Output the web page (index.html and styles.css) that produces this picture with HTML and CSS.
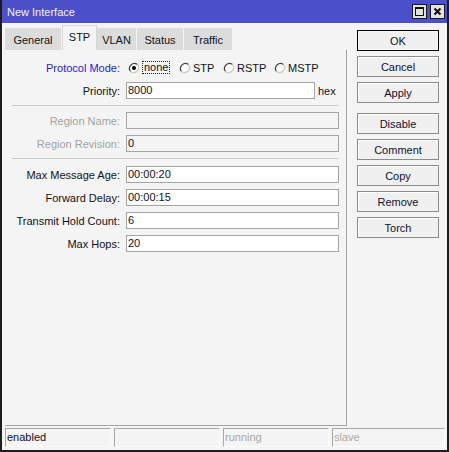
FILE: index.html
```html
<!DOCTYPE html>
<html>
<head>
<meta charset="utf-8">
<title>New Interface</title>
<link rel="stylesheet" href="styles.css">
</head>
<body>
<div class="window">
  <div class="titlebar">
    <span class="title">New Interface</span>
    <span class="tb-btn"><svg width="13" height="13" viewBox="0 0 13 13"><rect x="2.5" y="2.5" width="8" height="8" fill="none" stroke="#111" stroke-width="1"/><rect x="2" y="2" width="9" height="2" fill="#111"/></svg></span>
    <span class="tb-btn"><svg width="13" height="13" viewBox="0 0 13 13"><path d="M3.5 3.5 L9.5 9.5 M9.5 3.5 L3.5 9.5" stroke="#111" stroke-width="2"/></svg></span>
  </div>
  <div class="main">
    <div class="left">
      <div class="tabs">
        <div class="tab t-general">General</div>
        <div class="tab active t-stp">STP</div>
        <div class="tab t-vlan">VLAN</div>
        <div class="tab t-status">Status</div>
        <div class="tab t-traffic">Traffic</div>
      </div>
      <div class="panel">
        <div class="group">
          <div class="row">
            <div class="label blue">Protocol Mode:</div>
            <div class="radios">
              <div class="radio r1"><svg class="rb" width="12" height="12" viewBox="0 0 12 12"><circle cx="6" cy="6" r="5" fill="#fff"/><path d="M9.5 2.5 A5 5 0 0 0 2.5 9.5" stroke="#444" stroke-width="1.2" fill="none"/><path d="M2.5 9.5 A5 5 0 0 0 9.5 2.5" stroke="#c8c8c8" stroke-width="1.2" fill="none"/><circle cx="6" cy="6" r="2" fill="#000"/></svg><span class="focus">none</span></div>
              <div class="radio r2"><svg class="rb" width="12" height="12" viewBox="0 0 12 12"><circle cx="6" cy="6" r="5" fill="#fff"/><path d="M9.5 2.5 A5 5 0 0 0 2.5 9.5" stroke="#444" stroke-width="1.2" fill="none"/><path d="M2.5 9.5 A5 5 0 0 0 9.5 2.5" stroke="#c8c8c8" stroke-width="1.2" fill="none"/></svg><span>STP</span></div>
              <div class="radio r3"><svg class="rb" width="12" height="12" viewBox="0 0 12 12"><circle cx="6" cy="6" r="5" fill="#fff"/><path d="M9.5 2.5 A5 5 0 0 0 2.5 9.5" stroke="#444" stroke-width="1.2" fill="none"/><path d="M2.5 9.5 A5 5 0 0 0 9.5 2.5" stroke="#c8c8c8" stroke-width="1.2" fill="none"/></svg><span>RSTP</span></div>
              <div class="radio r4"><svg class="rb" width="12" height="12" viewBox="0 0 12 12"><circle cx="6" cy="6" r="5" fill="#fff"/><path d="M9.5 2.5 A5 5 0 0 0 2.5 9.5" stroke="#444" stroke-width="1.2" fill="none"/><path d="M2.5 9.5 A5 5 0 0 0 9.5 2.5" stroke="#c8c8c8" stroke-width="1.2" fill="none"/></svg><span>MSTP</span></div>
            </div>
          </div>
          <div class="row">
            <div class="label">Priority:</div>
            <div class="input short">8000</div>
            <div class="suffix">hex</div>
          </div>
        </div>
        <div class="sep"></div>
        <div class="group">
          <div class="row">
            <div class="label disabled">Region Name:</div>
            <div class="input off"></div>
          </div>
          <div class="row">
            <div class="label disabled">Region Revision:</div>
            <div class="input off">0</div>
          </div>
        </div>
        <div class="sep sep2"></div>
        <div class="group">
          <div class="row">
            <div class="label">Max Message Age:</div>
            <div class="input">00:00:20</div>
          </div>
          <div class="row">
            <div class="label">Forward Delay:</div>
            <div class="input">00:00:15</div>
          </div>
          <div class="row">
            <div class="label">Transmit Hold Count:</div>
            <div class="input">6</div>
          </div>
          <div class="row">
            <div class="label">Max Hops:</div>
            <div class="input">20</div>
          </div>
        </div>
      </div>
    </div>
    <div class="right">
      <div class="btn default">OK</div>
      <div class="btn">Cancel</div>
      <div class="btn">Apply</div>
      <div class="btn spaced">Disable</div>
      <div class="btn">Comment</div>
      <div class="btn">Copy</div>
      <div class="btn">Remove</div>
      <div class="btn">Torch</div>
    </div>
  </div>
  <div class="status">
    <div class="cell">enabled</div>
    <div class="cell"></div>
    <div class="cell dim">running</div>
    <div class="cell dim last">slave</div>
  </div>
</div>
</body>
</html>
```

FILE: styles.css
```css
html, body {
  margin: 0;
  padding: 0;
  background: #f4f4f4;
}
body {
  font-family: "Liberation Sans", Arial, sans-serif;
  font-size: 11px;
  color: #111118;
}
.window {
  width: 449px;
  height: 452px;
  box-sizing: border-box;
  border: 2px solid #1c1c1c;
  border-top: 0;
  background: #f4f4f4;
  display: flex;
  flex-direction: column;
}
.titlebar {
  height: 23px;
  flex: none;
  background: #4b4fc9;
  color: #f4f4f4;
  display: flex;
  align-items: center;
  padding: 0 2px 0 5px;
  gap: 3px;
}
.title {
  flex: 1;
  font-size: 11px;
  padding-top: 1px;
}
.tb-btn {
  width: 15px;
  height: 15px;
  box-sizing: border-box;
  border: 1px solid #1a1a1a;
  background: #e2e2e2;
  display: flex;
  align-items: center;
  justify-content: center;
}
.tb-btn svg { display: block; }
.main {
  flex: 1;
  display: flex;
  min-height: 0;
}
.left {
  width: 342px;
  margin-left: 3px;
  display: flex;
  flex-direction: column;
}
.tabs {
  height: 27px;
  flex: none;
  display: flex;
  align-items: flex-end;
}
.tab {
  height: 22px;
  box-sizing: border-box;
  background: #dcdcdc;
  border-right: 1px solid #f4f4f4;
  display: flex;
  align-items: center;
  justify-content: center;
  padding-top: 2px;
}
.t-general { width: 57px; }
.t-stp { width: 35px; }
.t-vlan { width: 40px; }
.t-status { width: 47px; }
.t-traffic { width: 49px; }
.tab.active {
  height: 25px;
  background: #f4f4f4;
  border: 1px solid #d6d6d6;
  border-bottom: 0;
  padding-top: 0;
  padding-bottom: 2px;
}
.panel {
  flex: 1;
  background: #f4f4f4;
  border-right: 1px solid #a4a4a4;
  border-bottom: 1px solid #a4a4a4;
  padding-top: 9px;
}
.group {
  display: flex;
  flex-direction: column;
  gap: 6px;
}
.row {
  height: 17px;
  display: flex;
  align-items: center;
}
.label {
  width: 115px;
  margin-right: 6px;
  text-align: right;
  white-space: nowrap;
}
.label.blue { color: #2222d8; }
.label.disabled { color: #a2a2a2; }
.input {
  width: 213px;
  height: 17px;
  box-sizing: border-box;
  border: 1px solid #a4a4a4;
  background: #fff;
  padding-left: 1px;
  line-height: 15px;
  color: #101028;
}
.input.short { width: 189px; }
.input.off { background: #f4f4f4; }
.suffix { margin-left: 3px; }
.sep {
  margin: 6px 8px 6px 7px;
  border-top: 1px solid #c8c8c8;
}
.sep2 { margin-top: 6px; margin-bottom: 7px; }
.radios {
  display: flex;
  align-items: center;
  padding-left: 2px;
}
.radio {
  display: flex;
  align-items: center;
  gap: 2px;
}
.radio .rb { display: block; flex: none; }
.radio.r1 { width: 51px; }
.radio.r2 { width: 44px; }
.radio.r3 { width: 51px; }
.focus {
  border: 1px dotted #222;
  padding: 0 1px;
  line-height: 11px;
}
.right {
  flex: 1;
  padding: 7px 0 0 10px;
  display: flex;
  flex-direction: column;
  gap: 5px;
}
.btn {
  width: 82px;
  height: 21px;
  box-sizing: border-box;
  border: 1px solid #8c8c8c;
  box-shadow: inset 1px 1px 0 #fff;
  background: #f0f0f0;
  display: flex;
  align-items: center;
  justify-content: center;
  color: #111130;
}
.btn.default {
  border: 1px solid #000;
  box-shadow: inset 0 0 0 1px #f8f8f8;
}
.btn.spaced { margin-top: 5px; }
.status {
  height: 19px;
  flex: none;
  margin: 2px 2px 3px 3px;
  display: flex;
  gap: 3px;
}
.cell {
  width: 106px;
  box-sizing: border-box;
  border-top: 1px solid #a8a8a8;
  border-left: 1px solid #a8a8a8;
  border-right: 1px solid #fbfbfb;
  border-bottom: 1px solid #fbfbfb;
  padding-left: 1px;
  line-height: 17px;
}
.cell.dim { color: #a8a8a8; }
.cell.last { flex: 1; width: auto; }
```
